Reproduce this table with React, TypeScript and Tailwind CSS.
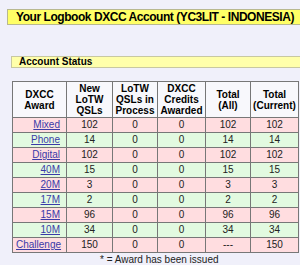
import React from 'react';

type Row = {
  award: string;
  newQsl: string;
  inProcess: string;
  awarded: string;
  totalAll: string;
  totalCurrent: string;
};

const rows: Row[] = [
  { award: 'Mixed', newQsl: '102', inProcess: '0', awarded: '0', totalAll: '102', totalCurrent: '102' },
  { award: 'Phone', newQsl: '14', inProcess: '0', awarded: '0', totalAll: '14', totalCurrent: '14' },
  { award: 'Digital', newQsl: '102', inProcess: '0', awarded: '0', totalAll: '102', totalCurrent: '102' },
  { award: '40M', newQsl: '15', inProcess: '0', awarded: '0', totalAll: '15', totalCurrent: '15' },
  { award: '20M', newQsl: '3', inProcess: '0', awarded: '0', totalAll: '3', totalCurrent: '3' },
  { award: '17M', newQsl: '2', inProcess: '0', awarded: '0', totalAll: '2', totalCurrent: '2' },
  { award: '15M', newQsl: '96', inProcess: '0', awarded: '0', totalAll: '96', totalCurrent: '96' },
  { award: '10M', newQsl: '34', inProcess: '0', awarded: '0', totalAll: '34', totalCurrent: '34' },
  { award: 'Challenge', newQsl: '150', inProcess: '0', awarded: '0', totalAll: '---', totalCurrent: '150' },
];

const th = 'border border-[#777] px-[2px] py-0 text-[10px] leading-[11px] font-bold text-black text-center align-middle';
const td = 'border border-[#777] px-[3px] py-0 h-[15px] text-[10px] leading-[12px] text-[#222] text-center';

export default function App() {
  return (
    <div className="w-[300px] h-[265px] overflow-hidden bg-[#f0f0fa] font-['Liberation_Sans',Arial,sans-serif]">
      {/* Page title */}
      <div className="pt-[9px] pl-[7px]">
        <div className="w-[320px] h-[16px] bg-[#ffff66] border border-[#b8b890] pl-[8px] text-[12px] tracking-[-0.45px] leading-[14px] font-bold text-black whitespace-nowrap">
          Your Logbook DXCC Account (YC3LIT - INDONESIA)
        </div>
      </div>

      {/* Section header */}
      <div className="mt-[31px] ml-[11px] w-[320px] h-[12px] bg-[#ffffaa] border border-[#c8c8a0] pl-[7px] text-[10px] leading-[10px] font-bold text-black whitespace-nowrap">
        Account Status
      </div>

      <table className="mt-[13px] ml-[12px] border-collapse border border-[#666] table-fixed w-[286px]">
        <colgroup>
          <col className="w-[54px]" />
          <col className="w-[46px]" />
          <col className="w-[45px]" />
          <col className="w-[48px]" />
          <col className="w-[45px]" />
          <col className="w-[48px]" />
        </colgroup>
        <thead>
          <tr className="h-[36px] bg-[#f8f8fc]">
            <th className={th}>DXCC<br />Award</th>
            <th className={th}>New<br />LoTW<br />QSLs</th>
            <th className={th}>LoTW<br />QSLs in<br />Process</th>
            <th className={th}>DXCC<br />Credits<br />Awarded</th>
            <th className={th}>Total<br />(All)</th>
            <th className={th}>Total<br />(Current)</th>
          </tr>
        </thead>
        <tbody>
          {rows.map((r, i) => (
            <tr key={r.award} className={i % 2 === 0 ? 'bg-[#ffdde0]' : 'bg-[#e2fae0]'}>
              <td className={td + ' text-right pr-[6px]'}>
                <a href="#" className="text-[#3a3aa8] underline">{r.award}</a>
              </td>
              <td className={td}>{r.newQsl}</td>
              <td className={td}>{r.inProcess}</td>
              <td className={td}>{r.awarded}</td>
              <td className={td}>{r.totalAll}</td>
              <td className={td}>{r.totalCurrent}</td>
            </tr>
          ))}
        </tbody>
      </table>

      <div className="ml-[100px] mt-[1px] text-[10px] leading-[12px] text-[#222] whitespace-nowrap">
        * = Award has been issued
      </div>
    </div>
  );
}
